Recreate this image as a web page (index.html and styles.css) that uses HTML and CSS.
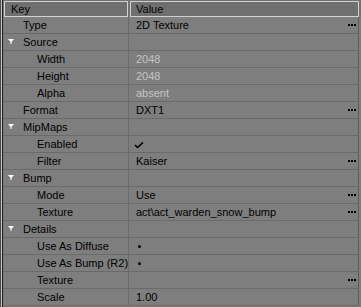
FILE: index.html
```
<!DOCTYPE html>
<html lang="en">
<head>
    <meta charset="UTF-8">
    <meta name="viewport" content="width=device-width, initial-scale=1.0">
    <title>Texture Properties</title>
    <link rel="stylesheet" href="styles.css">
</head>
<body>
    <div class="panel">
        <div class="header">
            <div class="head-cell head-key">Key</div>
            <div class="head-cell head-val">Value</div>
        </div>

        <div class="row">
            <div class="key lvl0">Type</div>
            <div class="val">2D Texture<span class="more"></span></div>
        </div>
        <div class="row">
            <div class="key"><svg class="arrow" width="6" height="6" viewBox="0 0 6 6"><polygon points="0,0 6,0 3,3.5" fill="#fff"/><rect x="2.5" y="3" width="1" height="2" fill="#fff"/></svg>Source</div>
            <div class="val"></div>
        </div>
        <div class="row">
            <div class="key lvl1">Width</div>
            <div class="val dim">2048</div>
        </div>
        <div class="row">
            <div class="key lvl1">Height</div>
            <div class="val dim">2048</div>
        </div>
        <div class="row">
            <div class="key lvl1">Alpha</div>
            <div class="val dim">absent</div>
        </div>
        <div class="row">
            <div class="key lvl0">Format</div>
            <div class="val">DXT1<span class="more"></span></div>
        </div>
        <div class="row">
            <div class="key"><svg class="arrow" width="6" height="6" viewBox="0 0 6 6"><polygon points="0,0 6,0 3,3.5" fill="#fff"/><rect x="2.5" y="3" width="1" height="2" fill="#fff"/></svg>MipMaps</div>
            <div class="val"></div>
        </div>
        <div class="row">
            <div class="key lvl1">Enabled</div>
            <div class="val"><svg class="check" width="10" height="7" viewBox="0 0 10 7"><polyline points="1,3 3.5,5.5 9,0.5" fill="none" stroke="#000" stroke-width="1.6"/></svg></div>
        </div>
        <div class="row">
            <div class="key lvl1">Filter</div>
            <div class="val">Kaiser<span class="more"></span></div>
        </div>
        <div class="row">
            <div class="key"><svg class="arrow" width="6" height="6" viewBox="0 0 6 6"><polygon points="0,0 6,0 3,3.5" fill="#fff"/><rect x="2.5" y="3" width="1" height="2" fill="#fff"/></svg>Bump</div>
            <div class="val"></div>
        </div>
        <div class="row">
            <div class="key lvl1">Mode</div>
            <div class="val">Use<span class="more"></span></div>
        </div>
        <div class="row">
            <div class="key lvl1">Texture</div>
            <div class="val">act\act_warden_snow_bump<span class="more"></span></div>
        </div>
        <div class="row">
            <div class="key"><svg class="arrow" width="6" height="6" viewBox="0 0 6 6"><polygon points="0,0 6,0 3,3.5" fill="#fff"/><rect x="2.5" y="3" width="1" height="2" fill="#fff"/></svg>Details</div>
            <div class="val"></div>
        </div>
        <div class="row">
            <div class="key lvl1">Use As Diffuse</div>
            <div class="val"><span class="dot"></span></div>
        </div>
        <div class="row">
            <div class="key lvl1">Use As Bump (R2)</div>
            <div class="val"><span class="dot"></span></div>
        </div>
        <div class="row">
            <div class="key lvl1">Texture</div>
            <div class="val"><span class="more"></span></div>
        </div>
        <div class="row">
            <div class="key lvl1">Scale</div>
            <div class="val">1.00</div>
        </div>
    </div>
</body>
</html>
```

FILE: styles.css
```
body {
    margin: 0;
    background: #7c7c7c;
    font-family: "Liberation Sans", Arial, sans-serif;
    font-size: 11px;
    color: #000;
}

.panel {
    width: 361px;
    height: 307px;
    box-sizing: border-box;
    padding-left: 3px;
    box-shadow: inset 1px 0 #4a4a4a, inset 2px 0 #c8c8c8, inset 3px 0 #1c1c1c;
    overflow: hidden;
}

.header {
    display: flex;
    gap: 2px;
    height: 17px;
    padding-top: 1px;
    box-sizing: border-box;
    background: #717171;
}

.head-cell {
    height: 16px;
    box-sizing: border-box;
    border: 1px solid #d4d4cc;
    line-height: 14px;
    background: #6f6f6f;
}

.head-key {
    margin-left: 1px;
    width: 124px;
    padding-left: 6px;
}

.head-val {
    width: 229px;
    padding-left: 5px;
}

.row {
    display: flex;
    width: 356px;
    height: 17px;
    box-sizing: border-box;
    border-bottom: 1px solid #6a6a6a;
    border-right: 1px solid #5e5e5e;
    background: #7e7e7e;
}

.key {
    display: flex;
    align-items: center;
    width: 126px;
    box-sizing: border-box;
    border-right: 1px solid #6a6a6a;
    padding-left: 5px;
    white-space: nowrap;
}

.key.lvl0 {
    padding-left: 20px;
}

.key.lvl1 {
    padding-left: 34px;
}

.arrow {
    margin-right: 9px;
}

.val {
    flex: 1;
    display: flex;
    align-items: center;
    padding-left: 7px;
    white-space: nowrap;
}

.val.dim {
    color: #c4c4c4;
}

.more {
    width: 2px;
    height: 2px;
    margin-left: auto;
    margin-right: 8px;
    background: #000;
    box-shadow: 3px 0 #000, 6px 0 #000;
}

.check {
    margin-left: -2px;
    margin-top: 2px;
}

.dot {
    width: 3px;
    height: 3px;
    margin-left: 2px;
    margin-top: 1px;
    border-radius: 50%;
    background: #000;
}
```
